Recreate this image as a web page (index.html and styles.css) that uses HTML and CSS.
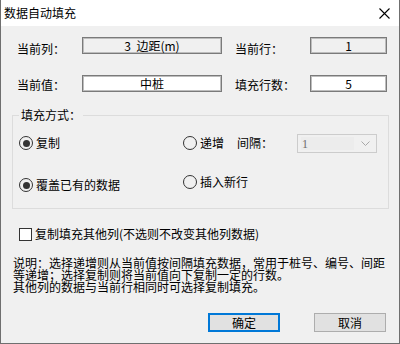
FILE: index.html
```html
<!DOCTYPE html>
<html lang="zh-CN">
<head>
  <meta charset="UTF-8" />
  <title>数据自动填充</title>
  <link rel="stylesheet" href="styles.css">
</head>
<body>
  <div class="window">
    <div class="titlebar">
      <span class="title">数据自动填充</span>
      <svg class="close" width="11" height="11" viewBox="0 0 11 11">
        <path d="M0.5 0.5 L10.5 10.5 M10.5 0.5 L0.5 10.5" stroke="#000" stroke-width="1.1" fill="none"/>
      </svg>
    </div>

    <div class="content">
      <div class="fields">
        <span class="label top">当前列：</span>
        <div class="box readonly">3&nbsp;&nbsp;边距(m)</div>
        <span class="label top second">当前行：</span>
        <div class="box readonly">1</div>
        <span class="label">当前值：</span>
        <div class="box">中桩</div>
        <span class="label second">填充行数：</span>
        <div class="box">5</div>
      </div>

      <fieldset class="group">
        <legend>填充方式：</legend>
        <div class="options">
          <label class="radio checked"><span class="circle"></span>复制</label>
          <div class="inc-row">
            <label class="radio"><span class="circle"></span>递增</label>
            <span class="step-label">间隔：</span>
            <div class="combo">
              <span class="combo-value">1</span>
              <svg class="chevron" width="9" height="5" viewBox="0 0 9 5">
                <path d="M0.5 0.5 L4.5 4.5 L8.5 0.5" stroke="#a8a8a8" fill="none"/>
              </svg>
            </div>
          </div>
          <label class="radio checked"><span class="circle"></span>覆盖已有的数据</label>
          <label class="radio raise"><span class="circle"></span>插入新行</label>
        </div>
      </fieldset>

      <label class="check"><span class="square"></span>复制填充其他列(不选则不改变其他列数据)</label>

      <div class="note">
        <div class="note-line">说明：选择递增则从当前值按间隔填充数据，常用于桩号、编号、间距</div>
        <div class="note-line">等递增；选择复制则将当前值向下复制一定的行数。</div>
        <div class="note-line">其他列的数据与当前行相同时可选择复制填充。</div>
      </div>

      <div class="buttons">
        <button class="btn default">确定</button>
        <button class="btn">取消</button>
      </div>
    </div>
  </div>
</body>
</html>
```

FILE: styles.css
```css
* {
  box-sizing: border-box;
  margin: 0;
  padding: 0;
}

body {
  font-family: "Noto Sans CJK SC", "Liberation Sans", sans-serif;
  font-size: 12px;
  color: #000;
  background-color: #f0f0f0;
}

.window {
  width: 400px;
  height: 344px;
  background-color: #f0f0f0;
  border: 1px solid #6f6f6f;
  border-top: none;
  display: flex;
  flex-direction: column;
}

.titlebar {
  height: 26px;
  background-color: #fff;
  display: flex;
  align-items: center;
  justify-content: space-between;
  padding: 0 9px 0 3px;
}

.title {
  font-size: 12px;
  line-height: 14px;
}

.close {
  display: block;
}

.content {
  padding: 0 10px 0 11px;
}

.fields {
  display: grid;
  grid-template-columns: 65px 140px 88px 77px;
  grid-template-rows: 17px 17px;
  row-gap: 21px;
  margin: 11px 0 0 5px;
}

.label {
  line-height: 14px;
  align-self: center;
  padding-top: 3px;
}

.label.top {
  padding-top: 7px;
}

.label.second {
  padding-left: 13px;
}

.box {
  background-color: #fff;
  border: 1px solid #7a7a7a;
  box-shadow: inset 0 0 0 1px #bdbdbd;
  text-align: center;
  line-height: 15px;
}

.box.readonly {
  background-color: #f0f0f0;
}

.group {
  border: 1px solid #dcdcdc;
  margin-top: 16px;
  padding: 0 0 16px 6px;
  min-width: 0;
}

.group legend {
  padding: 0 2px;
  line-height: 14px;
}

.options {
  display: grid;
  grid-template-columns: 164px 1fr;
  grid-template-rows: 20px 14px;
  row-gap: 25px;
  align-items: center;
  margin-top: 11px;
}

.radio {
  display: flex;
  align-items: center;
  gap: 3px;
  line-height: 14px;
}

.radio.raise {
  margin-bottom: 6px;
}

.circle {
  width: 14px;
  height: 14px;
  border: 1px solid #333;
  border-radius: 50%;
  display: flex;
  align-items: center;
  justify-content: center;
}

.radio.checked .circle::after {
  content: "";
  width: 7px;
  height: 7px;
  border-radius: 50%;
  background-color: #333;
}

.inc-row {
  display: flex;
  align-items: center;
}

.step-label {
  width: 60px;
  margin-left: 13px;
  line-height: 14px;
}

.combo {
  width: 80px;
  height: 19px;
  border: 1px solid #cccccc;
  display: flex;
  align-items: center;
  padding: 2px 6px 2px 3px;
}

.combo-value {
  flex: 1;
  height: 100%;
  background-color: #ececec;
  color: #6d6d6d;
  font-family: "Liberation Serif", serif;
  font-size: 12px;
  line-height: 14px;
  padding-left: 1px;
  margin-right: 7px;
}

.chevron {
  display: block;
}

.check {
  display: flex;
  align-items: center;
  gap: 3px;
  margin: 18px 0 0 7px;
  line-height: 14px;
}

.square {
  width: 13px;
  height: 13px;
  border: 1px solid #333;
  background-color: #fff;
}

.note {
  margin: 16px 0 0 1px;
  white-space: nowrap;
}

.note-line {
  height: 12px;
  line-height: 12px;
}

.buttons {
  display: flex;
  justify-content: flex-end;
  gap: 34px;
  margin: 20px 3px 0 0;
}

.btn {
  width: 72px;
  height: 19px;
  font-family: inherit;
  font-size: 12px;
  line-height: 14px;
  background-color: #e1e1e1;
  border: 1px solid #adadad;
  color: #000;
}

.btn.default {
  border: 2px solid #0078d7;
}
```
